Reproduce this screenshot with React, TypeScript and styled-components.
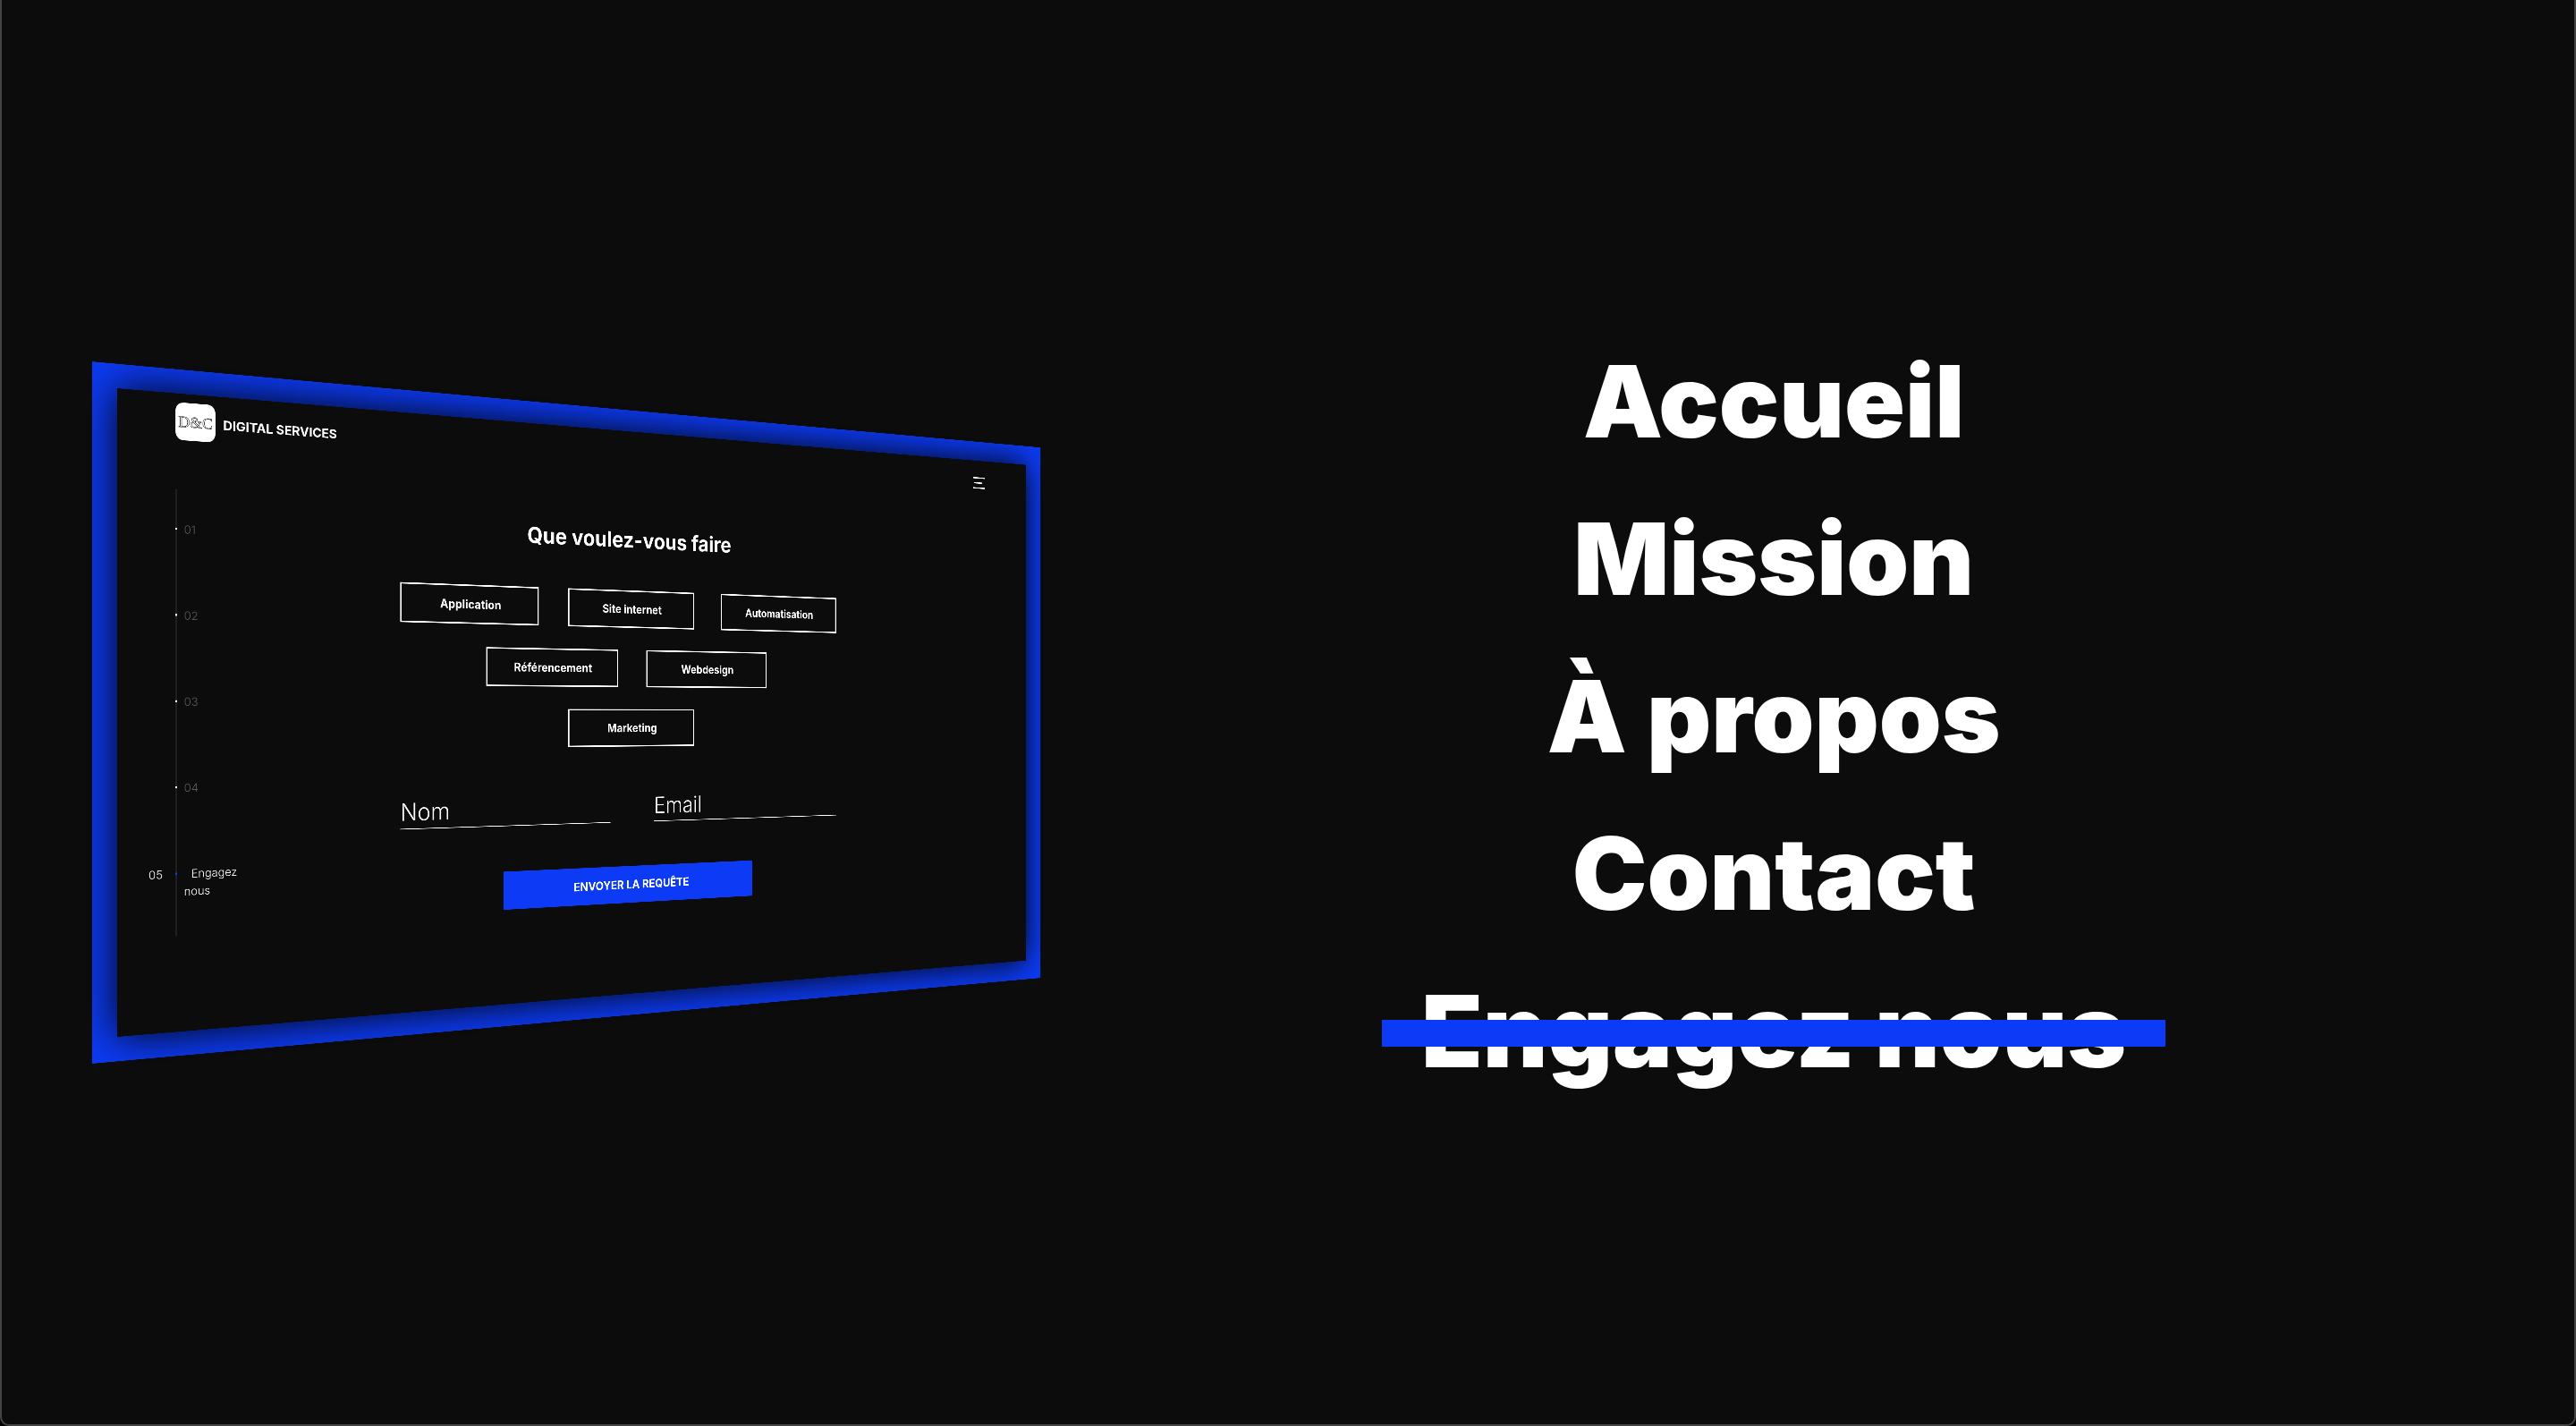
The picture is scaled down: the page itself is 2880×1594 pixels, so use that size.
import React from "react";
import styled, { createGlobalStyle } from "styled-components";

const ink = "#0c0c0c";
const blue = "#0d3bf5";

const GlobalStyle = createGlobalStyle`
  *, *::before, *::after { box-sizing: border-box; }
  html { background: #000; }
  body {
    margin: 0;
    color: #fff;
    font-family: Inter, "Open Sans", sans-serif;
  }
  button, input { font: inherit; color: inherit; }
`;

const Stage = styled.main`
  display: grid;
  grid-template: 100% / 100%;
  height: 100vh;
  overflow: hidden;
  border: 2px solid #444;
  border-top: 0;
  border-radius: 0 0 10px 10px;
  background: ${ink};
  perspective: 3000px;
`;

const TiltedFrame = styled.div`
  grid-area: 1 / 1;
  place-self: center;
  width: calc(100% + 120px);
  height: calc(100% + 120px);
  padding: 60px;
  background: ${blue};
  transform: translate3d(-1858px, 0, -4604px) rotateY(45deg);
`;

const Screen = styled.section`
  display: grid;
  grid-template-columns: 1fr minmax(0, 1398px) 1fr;
  grid-template-rows: 15% 70% 15%;
  height: 100%;
  background: ${ink};
  box-shadow: 0 0 100px #000;
`;

const Header = styled.header`
  grid-column: 1 / -1;
  display: flex;
  align-items: flex-start;
  justify-content: space-between;
  padding: 22px 168px 0 144px;
`;

const Brand = styled.a`
  display: flex;
  align-items: center;
  gap: 20px;
  color: #fff;
  text-decoration: none;
`;

const Logo = styled.span`
  display: grid;
  place-items: center;
  width: 100px;
  height: 94px;
  border-radius: 20px;
  background: #fff;
  color: #fff;
  font-family: "Liberation Serif", serif;
  font-size: 40px;
  -webkit-text-stroke: 1px #000;
`;

const BrandName = styled.span`
  padding-top: 4px;
  font-size: 33px;
  font-weight: 700;
  line-height: 40px;
`;

const MenuToggle = styled.button`
  display: block;
  margin-top: 30px;
  padding: 0;
  border: 0;
  background: none;
  line-height: 0;
`;

const Timeline = styled.ol`
  grid-row: 2;
  display: flex;
  flex-direction: column;
  gap: 171px;
  margin: 0 0 0 144px;
  padding: 78px 0 0;
  border-left: 3px solid #222;
  list-style: none;
  font-size: 29px;
  font-weight: 300;
  line-height: 44px;
`;

const Step = styled.li<{ $active?: boolean }>`
  position: relative;
  width: 170px;
  padding-left: 18px;
  color: ${(p) => (p.$active ? "#fff" : "#5c5c5c")};
  text-indent: ${(p) => (p.$active ? "18px" : "0")};

  &::before {
    content: "";
    position: absolute;
    top: 18px;
    left: -4px;
    width: 5px;
    height: 5px;
    background: ${(p) => (p.$active ? blue : "#fff")};
  }
`;

const StepNumber = styled.span`
  position: absolute;
  left: -70px;
  text-indent: 0;
`;

const Form = styled.form`
  grid-area: 2 / 2;
  display: flex;
  flex-direction: column;
  align-items: center;
  padding-top: 28px;
`;

const Title = styled.h2`
  margin: 0 0 103px;
  font-size: 61px;
  font-weight: 700;
  line-height: 80px;
`;

const Options = styled.div`
  display: flex;
  flex-direction: column;
  gap: 62px;
`;

const OptionRow = styled.div`
  display: flex;
  justify-content: center;
  gap: 90px;
`;

const Option = styled.button`
  width: 406px;
  height: 106px;
  padding: 2px 0 0;
  border: 4px solid #fff;
  background: none;
  font-size: 32px;
  font-weight: 700;
`;

const Fields = styled.div`
  display: flex;
  gap: 140px;
  width: 100%;
  margin-top: 128px;
`;

const Field = styled.input`
  flex: 1;
  min-width: 0;
  height: 86px;
  padding: 0 0 4px;
  border: 0;
  border-bottom: 2px solid #fff;
  border-radius: 0;
  background: none;
  font-size: 64px;
  font-weight: 300;
  outline: none;

  &::placeholder { color: #fff; opacity: 1; }
`;

const Submit = styled.button`
  width: 800px;
  height: 104px;
  margin-top: 124px;
  border: 0;
  background: ${blue};
  font-size: 33px;
  font-weight: 700;
  text-transform: uppercase;
`;

const Menu = styled.nav`
  grid-area: 1 / 1;
  place-self: center end;
  z-index: 1;
  display: flex;
  flex-direction: column;
  align-items: center;
  gap: 40px;
  padding: 8px calc(16vw - 4px) 0 0;
`;

const MenuLink = styled.a<{ $current?: boolean }>`
  position: relative;
  padding: 0 44px;
  color: #fff;
  font-size: 112px;
  font-weight: 900;
  line-height: 136px;
  text-decoration: none;
  white-space: nowrap;

  &::after {
    content: "";
    display: ${(p) => (p.$current ? "block" : "none")};
    position: absolute;
    top: 56px;
    left: 0;
    width: 100%;
    height: 30px;
    background: ${blue};
  }
`;

const steps = ["01", "02", "03", "04"];
const optionRows = [
  ["Application", "Site internet", "Automatisation"],
  ["Référencement", "Webdesign"],
  ["Marketing"],
];
const links = ["Accueil", "Mission", "À propos", "Contact", "Engagez nous"];

export default function App() {
  return (
    <>
      <GlobalStyle />
      <Stage>
        <TiltedFrame>
          <Screen>
            <Header>
              <Brand href="#accueil">
                <Logo>D&amp;C</Logo>
                <BrandName>DIGITAL SERVICES</BrandName>
              </Brand>
              <MenuToggle type="button" aria-label="Menu">
                <svg width="48" height="36" viewBox="0 0 48 36" stroke="#fff" strokeWidth="4">
                  <path d="M0 2H48M4 18H37M0 34H48" />
                </svg>
              </MenuToggle>
            </Header>
            <Timeline>
              {steps.map((step) => (
                <Step key={step}>{step}</Step>
              ))}
              <Step $active>
                <StepNumber>05</StepNumber>
                Engagez nous
              </Step>
            </Timeline>
            <Form onSubmit={(event) => event.preventDefault()}>
              <Title>Que voulez-vous faire</Title>
              <Options>
                {optionRows.map((row) => (
                  <OptionRow key={row[0]}>
                    {row.map((option) => (
                      <Option key={option} type="button">
                        {option}
                      </Option>
                    ))}
                  </OptionRow>
                ))}
              </Options>
              <Fields>
                <Field type="text" placeholder="Nom" aria-label="Nom" />
                <Field type="email" placeholder="Email" aria-label="Email" />
              </Fields>
              <Submit type="submit">Envoyer la requête</Submit>
            </Form>
          </Screen>
        </TiltedFrame>
        <Menu>
          {links.map((link, index) => (
            <MenuLink key={link} href="#" $current={index === links.length - 1}>
              {link}
            </MenuLink>
          ))}
        </Menu>
      </Stage>
    </>
  );
}
